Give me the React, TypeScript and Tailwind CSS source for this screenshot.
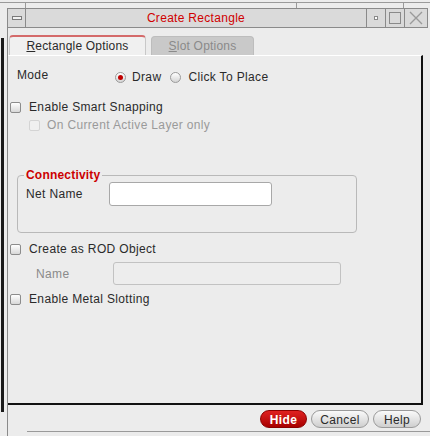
import React from "react"

const Check = ({ disabled }: { disabled?: boolean }) => (
  <span
    className={
      "inline-block w-[11px] h-[11px] rounded-[2px] border " +
      (disabled
        ? "border-[#d4d4d4] bg-[#f0f0f0]"
        : "border-[#8c8c8c] bg-gradient-to-b from-[#ffffff] to-[#d8d8d8]")
    }
  />
)

const Radio = ({ on }: { on?: boolean }) => (
  <span className="inline-flex items-center justify-center w-[11px] h-[11px] rounded-full border border-[#9a9a9a] bg-gradient-to-b from-[#ffffff] to-[#d4d4d4]">
    {on && <span className="w-[5px] h-[5px] rounded-full bg-[#c00000]" />}
  </span>
)

export default function App() {
  return (
    <div className="w-[430px] h-[436px] bg-[#ececec] text-[12px] tracking-[0.35px] text-[#2a2a2a] overflow-hidden flex flex-col" style={{ fontFamily: '"Liberation Sans", Arial, sans-serif' }}>
      {/* windows behind */}
      <div className="h-[8px] flex">
        <div className="w-[26px] border-r border-t border-[#9a9a9a] mt-[2px]" />
        <div className="w-[271px] border-r border-t border-[#9a9a9a] mt-[2px]" />
        <div className="w-[107px] border-r border-t border-[#9a9a9a] mt-[2px]" />
        <div className="flex-1 border-t border-[#9a9a9a] mt-[2px]" />
      </div>

      {/* title bar */}
      <div className="ml-[7px] w-[421px] h-[20px] flex border border-[#8a8a8a] bg-[#dadada]">
        <div className="w-[18px] border-r border-[#8a8a8a] flex items-center justify-center">
          <span className="w-[10px] h-[4px] border border-[#7a7a7a] bg-[#f2f2f2]" />
        </div>
        <div className="flex-1 flex items-center justify-center text-[#d00000] tracking-[0.3px]">Create Rectangle</div>
        <div className="w-[19px] border-l border-[#8a8a8a] flex items-center justify-center">
          <span className="w-[4px] h-[4px] border border-[#8a8a8a] bg-white" />
        </div>
        <div className="w-[19px] border-l border-[#8a8a8a] flex items-center justify-center">
          <span className="w-[12px] h-[12px] border border-[#8a8a8a]" />
        </div>
        <div className="w-[23px] border-l border-[#8a8a8a] flex items-center justify-center">
          <svg width="14" height="14" viewBox="0 0 14 14" fill="none" stroke="#9a9a9a" strokeWidth="1.4">
            <path d="M1 1 L13 13 M13 1 L1 13" />
          </svg>
        </div>
      </div>

      {/* body */}
      <div className="flex flex-1">
        <div className="w-[3px] mt-[10px] mb-[24px] ml-[1px] bg-[#1a1a1a]" />
        <div className="w-[3px]" />
        <div className="flex-1 border-l border-[#8a8a8a] flex flex-col">
          {/* tabs */}
          <div className="flex items-end h-[27px] pl-[1px] gap-[5px]">
            <div className="w-[137px] h-[20px] rounded-t-[4px] border-t-2 border-x border-t-[#d46a6a] border-x-[#c8c8c8] bg-[#f0f0f0] flex items-center justify-center tracking-[0.2px]">
              <span><span className="underline">R</span>ectangle Options</span>
            </div>
            <div className="w-[103px] h-[19px] rounded-t-[4px] bg-[#c9c9c9] border border-[#bdbdbd] border-b-0 flex items-center justify-center text-[#8a8a8a] tracking-[0.2px]">
              <span><span className="underline">S</span>lot Options</span>
            </div>
          </div>

          {/* panel */}
          <div className="h-[350px] w-[415px] border-t border-t-[#ffffff] border-r-2 border-b-2 border-[#111111] flex flex-col pl-[2px]">
            <div className="flex items-center h-[18px] mt-[12px]">
              <span className="w-[105px] pl-[7px] -mt-[4px]">Mode</span>
              <label className="flex items-center gap-[6px]">
                <Radio on />
                <span>Draw</span>
              </label>
              <label className="flex items-center gap-[7px] ml-[9px]">
                <Radio />
                <span>Click To Place</span>
              </label>
            </div>

            <label className="flex items-center gap-[8px] mt-[14px] h-[14px]">
              <Check />
              <span>Enable Smart Snapping</span>
            </label>
            <label className="flex items-center gap-[7px] mt-[4px] ml-[19px] h-[14px] text-[#9a9a9a]">
              <Check disabled />
              <span>On Current Active Layer only</span>
            </label>

            <fieldset className="mt-[37px] ml-[7px] w-[340px] h-[64px] border border-[#b9b9b9] rounded-[4px] px-[8px] pb-0">
              <legend className="px-[2px] -ml-[2px] font-bold text-[#cc0000] leading-[13px] tracking-[0.2px]">Connectivity</legend>
              <div className="flex items-center">
                <span className="w-[83px]">Net Name</span>
                <div className="w-[163px] h-[24px] bg-white border border-[#a8a8a8] rounded-[3px]" />
              </div>
            </fieldset>

            <label className="flex items-center gap-[8px] mt-[9px] h-[14px]">
              <Check />
              <span>Create as ROD Object</span>
            </label>
            <div className="flex items-center mt-[6px] h-[23px]">
              <span className="w-[103px] pl-[26px] text-[#8a8a8a]">Name</span>
              <div className="w-[228px] h-[23px] bg-[#ededed] border border-[#c2c2c2] rounded-[3px]" />
            </div>
            <label className="flex items-center gap-[8px] mt-[7px] h-[14px]">
              <Check />
              <span>Enable Metal Slotting</span>
            </label>
          </div>

          {/* buttons */}
          <div className="flex justify-end items-center gap-[4px] pr-[9px] mt-[5px]">
            <button className="w-[47px] h-[18px] rounded-full bg-gradient-to-b from-[#e02020] to-[#a80000] border border-[#8a0000] text-white font-bold">Hide</button>
            <button className="w-[58px] h-[18px] rounded-full bg-gradient-to-b from-[#fafafa] to-[#cfcfcf] border border-[#9a9a9a]">Cancel</button>
            <button className="w-[48px] h-[18px] rounded-full bg-gradient-to-b from-[#fafafa] to-[#cfcfcf] border border-[#9a9a9a]">Help</button>
          </div>
          <div className="flex-1" />
          <div className="h-[5px] border-t border-[#9a9a9a] ml-[19px]" />
        </div>
      </div>
    </div>
  )
}
